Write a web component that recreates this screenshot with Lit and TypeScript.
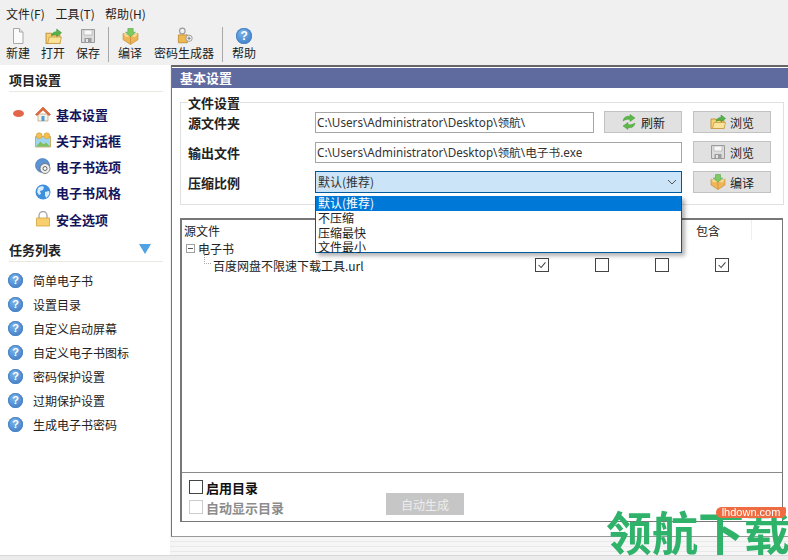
import { LitElement, html, css, svg } from "lit";
import { customElement } from "lit/decorators.js";

const ic = (size: number, body: unknown, cls = "") =>
  html`<svg class="ic ${cls}" width=${size} height=${size} viewBox="0 0 16 16">${body}</svg>`;

const docI = (s = 16) => ic(s, svg`<path d="M3.5 .5h6l3.5 3.5v11.500h-9.500z" fill="#fbfbfb" stroke="#a9a9a9"/><path d="M9.500 .5v3.500h3.500" fill="#e6e6e6" stroke="#a9a9a9"/>`);
const openI = (s = 16) => ic(s, svg`<path d="M1 5h5l1 1.500h7v8h-13z" fill="#f7d173" stroke="#c4953a"/><path d="M2.500 14.500l1.500-6h11.500l-1.500 6z" fill="#fbe39c" stroke="#c4953a" stroke-width=".7"/><path d="M6 7.500c.5-3 2.500-4 5-4v-2.500l4.500 3.500-4.500 3.500v-2c-2 0-3.500 .3-5 1.500z" fill="#55b548" stroke="#2f8b2c" stroke-width=".5"/>`);
const saveI = (s = 16) => ic(s, svg`<path d="M1.500 1.500h13v13h-13z" fill="#dcdcdc" stroke="#9a9a9a"/><path d="M4 2h8v5h-8z" fill="#f8f8f8" stroke="#aaa" stroke-width=".6"/><path d="M4.500 10h7v4.500h-7z" fill="#9c9c9c"/><path d="M6 11h2v3h-2z" fill="#e6e6e6"/>`);
const boxI = (s = 16) => ic(s, svg`<path d="M8 7.500l7-2.500v6l-7 4.500-7-4.500v-6z" fill="#eeb558" stroke="#c28a2e" stroke-width=".6"/><path d="M1 5l7 2.500 7-2.500-2.500 3.500-4.500-1-4.500 1z" fill="#f9dd95"/><path d="M8 7.500v8" stroke="#c28a2e" stroke-width=".6"/><path d="M5.500 .5h5v3.500h2.200l-4.700 4-4.700-4h2.200z" fill="#7ccb62" stroke="#4b9e3a" stroke-width=".5"/>`);
const keyI = (s = 18) => ic(s, svg`<circle cx="6.500" cy="3.500" r="2.500" fill="none" stroke="#9a9a9a"/><path d="M3 7h8v7h-8z" fill="#f0b94d" stroke="#b9852d" stroke-width=".7"/><circle cx="12.500" cy="10" r="2.800" fill="#f4f4f4" stroke="#8a8a8a" stroke-width=".7"/><path d="M12.500 8.500v3M11 10h3" stroke="#666" stroke-width=".7"/>`);
const helpI = (s = 16) => html`<span class="help" style="width:${s}px;height:${s}px;font-size:${s - 4}px">?</span>`;
const homeI = () => ic(16, svg`<path d="M3 8h10v7h-10z" fill="#f6f1e4" stroke="#b59b73" stroke-width=".7"/><path d="M6.500 10h3v5h-3z" fill="#4c9fd8"/><path d="M.5 8.500l7.500-7.500 7.500 7.500-1.500 1-6-5.500-6 5.500z" fill="#e2673a" stroke="#b8431f" stroke-width=".5"/>`);
const photoI = () => ic(16, svg`<path d="M.5 4.500h15v10.500h-15z" fill="#9fd6ef" stroke="#c6a24c" stroke-width=".8"/><path d="M1 14.500l4.500-5 3 3 2.500-2 4 4z" fill="#7fc05a"/><circle cx="4.200" cy="3.800" r="3" fill="#f5c04e" stroke="#c9932d" stroke-width=".5"/><circle cx="11.800" cy="3.800" r="3" fill="#f5c04e" stroke="#c9932d" stroke-width=".5"/>`);
const discI = () => ic(16, svg`<circle cx="7.500" cy="7.500" r="7" fill="#5b93d4" stroke="#3d6fae" stroke-width=".6"/><circle cx="10" cy="10.500" r="5" fill="#eee" stroke="#666" stroke-width=".8"/><circle cx="10" cy="10.500" r="2" fill="#fff" stroke="#555" stroke-width=".9"/>`);
const globeI = () => ic(16, svg`<circle cx="8" cy="8" r="7.500" fill="#3e8fdc"/><path d="M3 4c2-2 5-2 6-1l-1 3-3 1 1 3-2 1-2-3z" fill="#d8ecfa"/><path d="M10 8l4-1 .5 3-3 4-1.500-2z" fill="#d8ecfa"/>`);
const lockI = () => ic(16, svg`<path d="M4 7v-2.500a4 4 0 0 1 8 0v2.500" fill="none" stroke="#a5a5a5" stroke-width="1.300"/><path d="M1.500 7h13v8h-13z" fill="#f8cf6f" stroke="#d3a23e" stroke-width=".8"/>`);
const refreshI = () => ic(16, svg`<path d="M2 7c.5-3.500 3.500-5.500 7-4.500v-2l5 3.500-5 3.500v-2c-2.500-.8-4.500 0-7 1.500z" fill="#5cb947" stroke="#37882c" stroke-width=".4"/><path d="M14 9c-.5 3.500-3.500 5.500-7 4.500v2l-5-3.500 5-3.500v2c2.500 .8 4.500 0 7-1.500z" fill="#5cb947" stroke="#37882c" stroke-width=".4"/>`);
const tick = svg`<path d="M3 7l3 3 5-6" fill="none" stroke="#444" stroke-width="1.200"/>`;

@customElement("app-root")
class AppRoot extends LitElement {
  static styles = css`
    :host{display:block;width:788px;height:560px;position:relative;overflow:hidden;background:#f0f0f0;color:#222;
      font:12px "Noto Sans CJK SC","Noto Sans",sans-serif;}
    .ic{display:block;flex:none;}
    .help{display:flex;flex:none;align-items:center;justify-content:center;border-radius:50%;color:#fff;font-weight:700;line-height:1;
      font-family:"Liberation Sans",sans-serif;background:radial-gradient(circle at 40% 30%,#7cb4ea,#2f74c2);box-shadow:inset 0 0 0 1px #4c84c4;}
    .menu{height:24px;display:flex;align-items:center;padding:3px 0 0 6px;box-sizing:border-box;}
    .menu span{width:49.500px;}
    .tools{height:41px;display:flex;align-items:flex-start;padding-top:3px;box-sizing:border-box;}
    .tool{display:flex;flex-direction:column;align-items:center;line-height:15px;}
    .tool .slot{height:18px;display:flex;align-items:center;}
    .sep{width:1px;height:35px;background:#a8a8a8;margin:0 9px 0 8px;flex:none;}
    .body{display:flex;height:490px;}
    .side{width:170px;flex:none;background:#fff;box-sizing:border-box;padding:3px 7px 0 0;}
    .sh{margin-left:9px;height:23px;display:flex;align-items:center;justify-content:space-between;font:700 13px "Noto Sans CJK SC",sans-serif;color:#222;border-bottom:1px solid #ebe8df;padding-right:12px;}
    .navs{padding-top:9px;height:130px;}
    .nav{height:26px;display:flex;align-items:center;position:relative;padding-left:35px;gap:5px;font-weight:700;font-size:13px;color:#14145c;}
    .nav:last-child{margin-top:1px;}
    .dot{position:absolute;left:13px;top:9px;width:11px;height:7px;border-radius:50%;background:#e2654c;}
    .tri{width:0;height:0;border-left:6px solid transparent;border-right:6px solid transparent;border-top:10px solid #4da3e6;}
    .sh2{margin-top:6px;height:24px;}
    .tasks{padding-top:6px;}
    .task{height:24px;display:flex;align-items:center;padding-left:8px;gap:10px;}
    .main{flex:1;display:flex;flex-direction:column;min-width:0;}
    .panel{height:472px;flex:none;background:#fff;border-top:2px solid #666;border-left:1px solid #777;border-bottom:1px solid #999;box-sizing:border-box;padding-top:1px;margin-left:1px;position:relative;}
    .title{height:20px;background:#5f6b9f;color:#fff;font:700 13px/20px "Noto Sans CJK SC",sans-serif;padding-left:8px;}
    fieldset{margin:8px 4px 0 8px;padding:0 12px 0 7px;height:109px;box-sizing:border-box;border:1px solid #e0e0e0;}
    legend{font:700 13px/13px "Noto Sans CJK SC",sans-serif;padding:0;color:#222;}
    .rows{display:grid;grid-template-columns:127px 279px 88px 89px;row-gap:8px;margin-top:2px;align-items:center;}
    .lbl{font:700 13px "Noto Sans CJK SC",sans-serif;color:#222;}
    .inp{height:21px;box-sizing:border-box;border:1px solid #a5a5a5;background:#fff;padding-left:1px;line-height:18px;font-size:11.700px;font-family:"Noto Sans","Noto Sans CJK SC",sans-serif;white-space:nowrap;overflow:hidden;color:#333;}
    .wide{grid-column:span 2;width:367px;}
    .sel{height:22px;font-size:12px;background:#cce4f7;border:1px solid #005a9e;padding-left:2px;font-family:"Noto Sans CJK SC",sans-serif;display:flex;align-items:center;justify-content:space-between;padding-right:4px;}
    .btn{width:78px;height:22px;box-sizing:border-box;border:1px solid #c2c2c2;background:#e1e1e1;display:flex;align-items:center;justify-content:center;gap:4px;color:#222;}
    .b1{margin-left:10px;}
    .b2{margin-left:11px;}
    .pop{position:absolute;left:143px;top:129px;width:367px;height:57px;box-sizing:border-box;background:#fff;border:1px solid #005a9e;border-top:none;box-shadow:3px 3px 4px rgba(0,0,0,.3);line-height:14.500px;color:#222;z-index:2;}
    .pop div{height:14.500px;padding-left:2px;}
    .pop .on{height:15px;background:#0078d7;color:#fff;}
    .tbl{margin:13px 5px 0 8px;height:304px;box-sizing:border-box;border:2px solid #777;border-bottom-width:1px;border-right-width:1px;display:flex;flex-direction:column;}
    .hd{display:grid;grid-template-columns:330px 60px 60px 60px 60px;height:20px;align-items:center;}
    .hd span{padding-left:2px;}
    .hd .c{padding-left:4px;height:100%;display:flex;align-items:center;box-sizing:border-box;border-right:1px solid #eee;}
    .node{height:16px;display:flex;align-items:center;padding-left:4px;gap:3px;}
    .minus{width:9px;height:9px;box-sizing:border-box;border:1px solid #a0a0a0;position:relative;flex:none;}
    .minus i{position:absolute;left:1px;right:1px;top:3px;height:1px;background:#555;}
    .leaf{display:grid;grid-template-columns:330px 60px 60px 60px 60px;height:18px;align-items:center;}
    .name{position:relative;padding-left:31px;white-space:nowrap;}
    .name i{position:absolute;left:22px;top:-8px;width:7px;height:15px;border-left:1px dotted #aaa;border-bottom:1px dotted #aaa;box-sizing:border-box;}
    .cell{display:flex;justify-content:center;}
    .ck{display:block;width:14px;height:14px;box-sizing:border-box;border:1px solid #444;background:#fff;}
    .fill{flex:1;}
    .foot{height:49px;border-top:1px solid #8a8a8a;display:flex;box-sizing:border-box;padding:7px 0 0 7px;}
    .opts{width:197px;display:flex;flex-direction:column;gap:6px;font:700 13px "Noto Sans CJK SC",sans-serif;color:#111;}
    .opt{display:flex;align-items:center;gap:3px;height:14px;}
    .off{color:#8c8c8c;}
    .off .ck{border-color:#ccc;}
    .auto{width:78px;height:22px;margin-top:13px;background:#c6c6c6;color:#ededed;display:flex;align-items:center;justify-content:center;}
    .stripes{flex:1;background:repeating-linear-gradient(#f6f6f6 0 4px,#e9e9e9 4px 5px);}
    .status{height:5px;background:#ececec;border-top:1px solid #d8d8d8;box-sizing:border-box;}
    .mark{position:absolute;left:606px;top:499px;z-index:3;width:182px;height:61px;pointer-events:none;overflow:hidden;}
    .mk{position:absolute;left:0;top:1px;font:700 46px/60px "Noto Sans CJK SC",sans-serif;color:#2fb36a;white-space:nowrap;mix-blend-mode:multiply;}
    .tag{position:absolute;left:110px;top:8px;width:70px;height:11px;background:#ef6c42;color:#fff;border-radius:6px 2px 6px 6px;font:11px/11px "Liberation Sans",sans-serif;text-align:center;}
  `;

  render() {
    const ck = (on: boolean) => html`<span class="ck">${on ? html`<svg width="12" height="12" viewBox="0 0 14 14" style="display:block">${tick}</svg>` : ""}</span>`;
    return html`
      <div class="menu"><span>文件(F)</span><span>工具(T)</span><span>帮助(H)</span></div>
      <div class="tools">
        <div class="tool" style="margin-left:6px"><div class="slot">${docI()}</div>新建</div>
        <div class="tool" style="margin-left:11px"><div class="slot">${openI(17)}</div>打开</div>
        <div class="tool" style="margin-left:11px"><div class="slot">${saveI()}</div>保存</div>
        <div class="sep"></div>
        <div class="tool"><div class="slot">${boxI(17)}</div>编译</div>
        <div class="tool" style="margin-left:12px"><div class="slot">${keyI()}</div>密码生成器</div>
        <div class="sep"></div>
        <div class="tool"><div class="slot">${helpI(16)}</div>帮助</div>
      </div>
      <div class="body">
        <div class="side">
          <div class="sh">项目设置</div>
          <div class="navs">
            <div class="nav"><span class="dot"></span>${homeI()}基本设置</div>
            <div class="nav">${photoI()}关于对话框</div>
            <div class="nav">${discI()}电子书选项</div>
            <div class="nav">${globeI()}电子书风格</div>
            <div class="nav">${lockI()}安全选项</div>
          </div>
          <div class="sh sh2">任务列表<span class="tri"></span></div>
          <div class="tasks">
            ${["简单电子书","设置目录","自定义启动屏幕","自定义电子书图标","密码保护设置","过期保护设置","生成电子书密码"].map(t => html`<div class="task">${helpI(15)}${t}</div>`)}
          </div>
        </div>
        <div class="main">
          <div class="panel">
            <div class="title">基本设置</div>
            <fieldset>
              <legend>文件设置</legend>
              <div class="rows">
                <div class="lbl">源文件夹</div>
                <div class="inp">C:\\Users\\Administrator\\Desktop\\领航\\</div>
                <div class="btn b1">${refreshI()}刷新</div>
                <div class="btn b2">${openI()}浏览</div>
                <div class="lbl">输出文件</div>
                <div class="inp wide">C:\\Users\\Administrator\\Desktop\\领航\\电子书.exe</div>
                <div class="btn b2">${saveI()}浏览</div>
                <div class="lbl">压缩比例</div>
                <div class="inp wide sel"><span>默认(推荐)</span><svg width="10" height="6" viewBox="0 0 10 6"><path d="M1 1l4 4 4-4" fill="none" stroke="#555"/></svg></div>
                <div class="btn b2">${boxI()}编译</div>
              </div>
            </fieldset>
            <div class="pop">
              <div class="on">默认(推荐)</div><div>不压缩</div><div>压缩最快</div><div>文件最小</div>
            </div>
            <div class="tbl">
              <div class="hd"><span>源文件</span><span></span><span></span><span></span><span class="c">包含</span></div>
              <div class="node"><span class="minus"><i></i></span>电子书</div>
              <div class="leaf">
                <div class="name"><i></i>百度网盘不限速下载工具.url</div>
                <div class="cell">${ck(true)}</div><div class="cell">${ck(false)}</div><div class="cell">${ck(false)}</div><div class="cell">${ck(true)}</div>
              </div>
              <div class="fill"></div>
              <div class="foot">
                <div class="opts">
                  <div class="opt">${ck(false)}启用目录</div>
                  <div class="opt off">${ck(false)}自动显示目录</div>
                </div>
                <div class="auto">自动生成</div>
              </div>
            </div>
          </div>
          <div class="stripes"></div>
        </div>
      </div>
      <div class="status"></div>
      <div class="mark"><div class="mk">领航下载</div><div class="tag">lhdown.com</div></div>
    `;
  }
}
void AppRoot;
